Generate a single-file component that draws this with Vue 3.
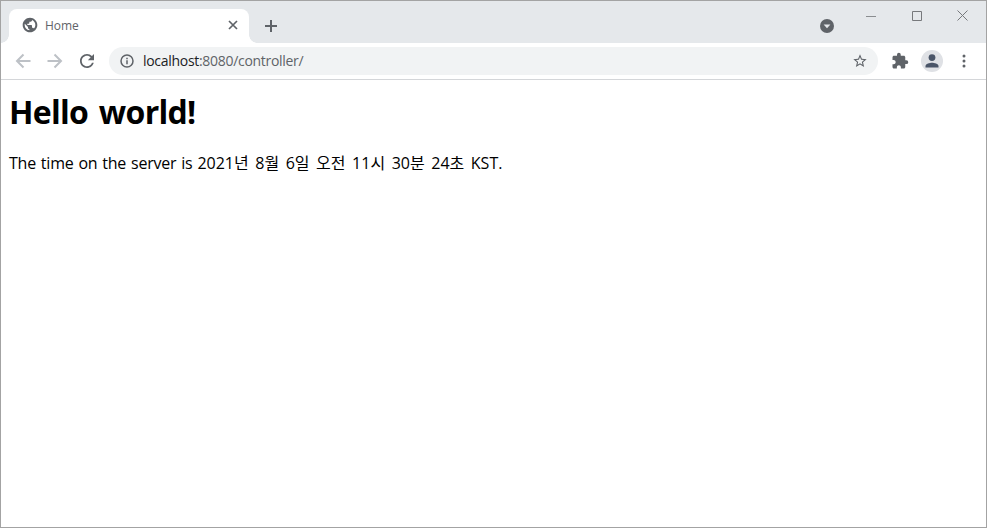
<script setup>
const title = 'Home'
const host = 'localhost'
const path = ':8080/controller/'
</script>

<template>
  <div class="window">
    <div class="tabstrip">
      <div class="tab">
        <svg class="favicon" width="16" height="16" viewBox="0 0 24 24" fill="#5f6368">
          <path d="M12 1C5.92 1 1 5.92 1 12s4.92 11 11 11 11-4.920 11-11S18.080 1 12 1zm-1 18.930c-3.950-.490-7-3.850-7-7.930 0-.620.080-1.210.210-1.790L9 15v1c0 1.100.900 2 2 2v1.930zm6.900-2.540c-.260-.810-1-1.390-1.900-1.390h-1v-3c0-.550-.450-1-1-1H8v-2h2c.550 0 1-.450 1-1V7h2c1.100 0 2-.900 2-2v-.410c2.930 1.190 5 4.060 5 7.410 0 2.080-.800 3.970-2.100 5.390z"/>
        </svg>
        <span class="tab-title">{{ title }}</span>
        <svg class="tab-close" width="10" height="10" viewBox="0 0 10 10" stroke="#5f6368" stroke-width="1.7" fill="none">
          <path d="M1 1l8 8M9 1l-8 8"/>
        </svg>
      </div>
      <svg class="new-tab" width="14" height="14" viewBox="0 0 14 14" stroke="#5f6368" stroke-width="2" fill="none">
        <path d="M7 1v12M1 7h12"/>
      </svg>
      <div class="spacer"></div>
      <div class="search-tabs">
        <svg width="14" height="14" viewBox="0 0 14 14">
          <circle cx="7" cy="7" r="7" fill="#5f6368"/>
          <path d="M3.600 5.400h6.800L7 9.200z" fill="#e5e8eb"/>
        </svg>
      </div>
      <div class="win-controls">
        <svg width="10" height="10" viewBox="0 0 10 10" stroke="#8a8d90" fill="none"><path d="M0 5.500h10"/></svg>
        <svg width="10" height="10" viewBox="0 0 10 10" stroke="#77797c" fill="none"><path d="M.5.500h9v9h-9z"/></svg>
        <svg class="win-close" width="11" height="11" viewBox="0 0 11 11" stroke="#77797c" fill="none"><path d="M.5.500l10 10M10.500.500l-10 10"/></svg>
      </div>
    </div>

    <div class="toolbar">
      <svg class="nav" width="16" height="16" viewBox="0 0 16 16" stroke="#bdc1c6" stroke-width="2" fill="none">
        <path d="M15.500 8H2M8.500 1.500L2 8l6.500 6.500"/>
      </svg>
      <svg class="nav" width="16" height="16" viewBox="0 0 16 16" stroke="#bdc1c6" stroke-width="2" fill="none">
        <path d="M.5 8H14M7.500 1.500L14 8l-6.500 6.500"/>
      </svg>
      <svg class="reload" width="14" height="14" viewBox="0 0 24 24" fill="#5f6368">
        <path d="M20.500 3.500A11.950 11.950 0 0 0 11.990 0C5.360 0 0 5.370 0 12s5.360 12 11.990 12c5.600 0 10.260-3.820 11.600-9h-3.120c-1.240 3.500-4.570 6-8.480 6-4.970 0-9-4.030-9-9s4.030-9 9-9c2.490 0 4.710 1.040 6.330 2.670L13.500 10.500H24V0l-3.500 3.500z"/>
      </svg>
      <div class="omnibox">
        <svg width="14" height="14" viewBox="0 0 14 14" fill="none">
          <circle cx="7" cy="7" r="6" stroke="#5f6368" stroke-width="1.5"/>
          <path d="M7 6.200v4M7 3.800v1.400" stroke="#5f6368" stroke-width="1.5"/>
        </svg>
        <span class="url"><span class="host">{{ host }}</span>{{ path }}</span>
        <svg class="star" width="16" height="16" viewBox="0 0 24 24" fill="#5f6368">
          <path d="M22 9.240l-7.190-.620L12 2 9.190 8.630 2 9.240l5.460 4.730L5.820 21 12 17.270 18.180 21l-1.630-7.030L22 9.240zM12 15.400l-3.760 2.270 1-4.280-3.320-2.880 4.380-.380L12 6.100l1.710 4.040 4.380.380-3.320 2.880 1 4.280L12 15.400z"/>
        </svg>
      </div>
      <svg class="puzzle" width="18" height="18" viewBox="0 0 24 24" fill="#5f6368">
        <path d="M20.500 11H19V7c0-1.100-.900-2-2-2h-4V3.500a2.500 2.500 0 0 0-5 0V5H4c-1.100 0-2 .900-2 2v3.800h1.500c1.500 0 2.700 1.200 2.700 2.700S5 16.200 3.500 16.200H2V20c0 1.100.900 2 2 2h3.800v-1.500c0-1.500 1.200-2.700 2.700-2.700s2.700 1.200 2.700 2.700V22H17c1.100 0 2-.900 2-2v-4h1.500a2.500 2.500 0 0 0 0-5z"/>
      </svg>
      <div class="avatar">
        <svg width="16" height="16" viewBox="0 0 16 16" fill="#4a5568">
          <circle cx="8" cy="4.600" r="3.400"/>
          <path d="M1.500 14.500v-1.400c0-2.200 4.300-3.300 6.500-3.300s6.500 1.100 6.500 3.300v1.400z"/>
        </svg>
      </div>
      <svg class="menu" width="4" height="14" viewBox="0 0 4 14" fill="#5f6368">
        <circle cx="2" cy="2" r="1.500"/>
        <circle cx="2" cy="7" r="1.500"/>
        <circle cx="2" cy="12" r="1.500"/>
      </svg>
    </div>

    <main class="page">
      <h1>Hello world!</h1>
      <p><span class="lead">The time on the server is </span><span class="date">2021년 8월 6일 오전 11시 30분 24초 </span>KST.</p>
    </main>
  </div>
</template>

<style>
html, body {
  margin: 0;
  height: 100%;
  background: #fff;
}
</style>

<style scoped>
.window {
  box-sizing: border-box;
  width: 987px;
  height: 528px;
  border: 1px solid #a3a3a3;
  display: flex;
  flex-direction: column;
  overflow: hidden;
  font-family: "Open Sans", "Noto Sans CJK KR", sans-serif;
  background: #fff;
}

.tabstrip {
  height: 42px;
  background: #e5e8eb;
  display: flex;
  align-items: flex-end;
  padding-left: 8px;
  flex: none;
}

.tab {
  position: relative;
  box-sizing: border-box;
  width: 240px;
  height: 34px;
  background: #fff;
  border-radius: 8px 8px 0 0;
  display: flex;
  align-items: center;
  padding: 0 11px 2px 13px;
}

/* concave feet of the active tab */
.tab::before,
.tab::after {
  content: "";
  position: absolute;
  bottom: 0;
  width: 8px;
  height: 8px;
}

.tab::before {
  left: -8px;
  background: radial-gradient(circle at 0 0, #e5e8eb 7.5px, #fff 8px);
}

.tab::after {
  right: -8px;
  background: radial-gradient(circle at 100% 0, #e5e8eb 7.5px, #fff 8px);
}

.tab-title {
  margin-left: 7px;
  flex: 1;
  font: 12px "Open Sans", sans-serif;
  color: #5f6368;
  letter-spacing: -0.05px;
}

.new-tab {
  margin: 0 0 10px 15px;
}

.spacer {
  flex: 1;
}

.search-tabs {
  display: flex;
  margin-bottom: 10px;
  margin-right: 32px;
}

.win-controls {
  align-self: flex-start;
  display: flex;
  align-items: center;
  gap: 36px;
  margin: 9px 18px 0 0;
}

.win-close {
  margin-left: -1px;
}

.toolbar {
  box-sizing: border-box;
  height: 37px;
  flex: none;
  display: flex;
  align-items: center;
  padding: 0 0 1px 14px;
  border-bottom: 1px solid #d4d6d9;
  background: #fff;
}

.nav {
  margin-right: 16px;
}

.reload {
  margin-left: 1px;
}

.omnibox {
  box-sizing: border-box;
  width: 769px;
  height: 28px;
  margin-left: 15px;
  border-radius: 14px;
  background: #f1f3f4;
  display: flex;
  align-items: center;
  padding: 0 10px 0 11px;
}

.url {
  margin-left: 9px;
  flex: 1;
  font: 14px "Open Sans", sans-serif;
  letter-spacing: -0.3px;
  color: #5f6368;
}

.host {
  color: #202124;
}

.puzzle {
  margin-left: 13px;
}

.avatar {
  width: 22px;
  height: 22px;
  margin-left: 12px;
  border-radius: 50%;
  background: #dfe1e5;
  display: flex;
  align-items: center;
  justify-content: center;
}

.menu {
  margin-left: 19px;
}

.page {
  flex: 1;
  padding: 0 8px;
  color: #000;
}

h1 {
  margin: 10px 0 0;
  font-size: 32px;
  line-height: 43px;
  font-weight: 700;
  letter-spacing: -0.7px;
  word-spacing: 3px;
}

p {
  margin: 20px 0 0;
  font-size: 16px;
  line-height: 21px;
  word-spacing: 1px;
}

.lead {
  letter-spacing: -0.23px;
}

.date {
  word-spacing: 2.4px;
}
</style>
